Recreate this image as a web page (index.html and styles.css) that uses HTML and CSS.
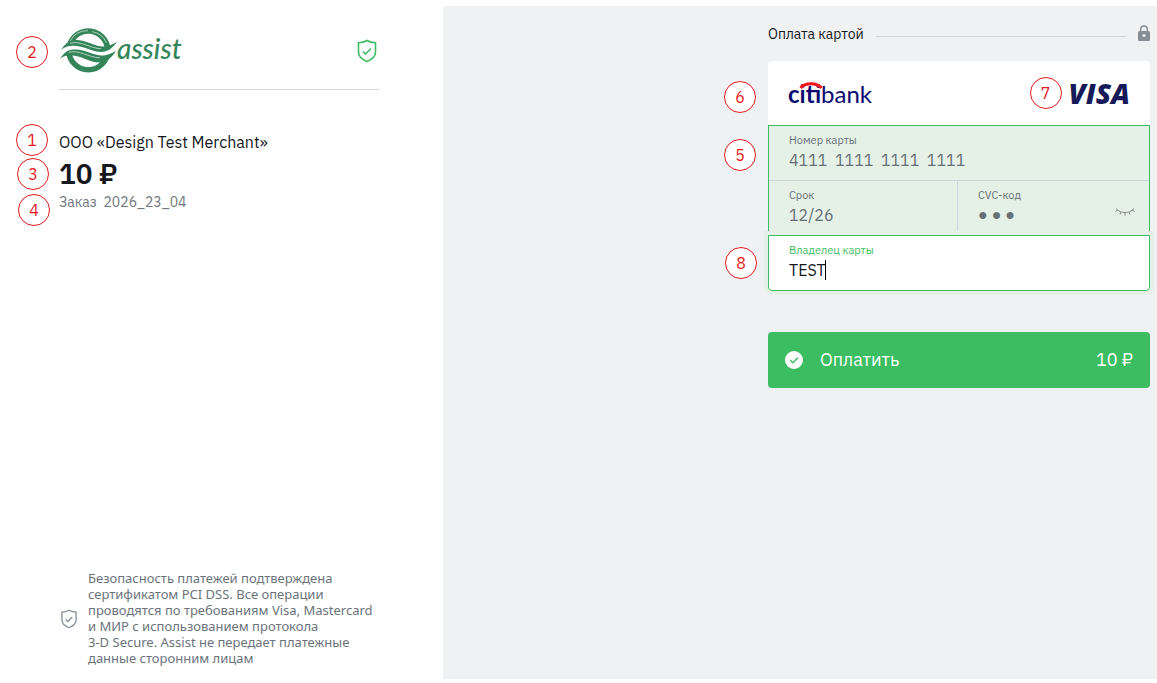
FILE: index.html
```
<!DOCTYPE html>
<html lang="ru">
<head>
<meta charset="utf-8">
<title>Оплата картой</title>
<link rel="stylesheet" href="styles.css">
</head>
<body>
<div class="page">
  <aside class="order">
    <header class="brand">
      <span class="badge">2</span>
      <div class="assist">
        <svg class="assist-mark" viewBox="0 0 58 47" aria-hidden="true">
          <circle cx="29.3" cy="23.4" r="19.4" fill="none" stroke="#35855a" stroke-width="5.6"/>
          <path d="M11 14A20.5 20.5 0 0 1 29 3.6M33 4.6A19 19 0 0 1 47.500 16" fill="none" stroke="#fff" stroke-width=".6"/>
          <path d="M2 28C8 20 14 20 19 21C30 22 34 26.500 43 27C49 27 53 24 57 20" fill="none" stroke="#fff" stroke-width="6"/>
          <path d="M2 23C8 13.500 14 12.500 20 13.200C30 14.200 36 19.500 44 19.500C50 19.500 54 17 58 15C53 21.500 49 25 42 25C34 25 28 20.500 18 19C11 18.300 7 19 2 23Z" fill="#35855a"/>
          <path d="M1 32C6 23 12 21.800 18 22.600C28 23.600 34 28.500 43 28.500C49 28.500 53 26 57 24C52 31.500 47 35.500 40 35.500C32 35.500 26 31 17 29C10 27.500 5 28.500 1 32Z" fill="#35855a"/>
          <path d="M11 16.200C22 13.200 31 21.500 42 21.700M10 25.200C20 22.600 30 30.600 41 30.800" fill="none" stroke="#fff" stroke-width=".6"/>
        </svg>
        <span class="assist-name">assist</span>
      </div>
      <svg class="shield" viewBox="0 0 20 24" aria-hidden="true">
        <path d="M10 1.5C12.5 3 15.5 3.7 18.5 3.8V13C18.5 18.5 14.5 20.7 10 22.5C5.500 20.700 1.500 18.500 1.500 13V3.800C4.500 3.700 7.500 3 10 1.500Z"/>
        <path d="M6 12.600L8.500 15L14 9.500"/>
      </svg>
    </header>
    <div class="summary">
      <div class="merchant"><span class="badge badge-merchant">1</span>ООО «Design Test Merchant»</div>
      <div class="price"><span class="badge badge-price">3</span>10 ₽</div>
      <div class="number"><span class="badge badge-number">4</span>Заказ&nbsp; 2026_23_04</div>
    </div>
    <footer class="security">
      <svg class="shield shield-small" viewBox="0 0 20 24" aria-hidden="true">
        <path d="M10 1.5C12.5 3 15.5 3.7 18.5 3.8V13C18.5 18.5 14.5 20.7 10 22.5C5.500 20.700 1.500 18.500 1.500 13V3.800C4.500 3.700 7.500 3 10 1.500Z"/>
        <path d="M6 12.600L8.500 15L14 9.500"/>
      </svg>
      <p>Безопасность платежей подтверждена<br>сертификатом PCI DSS. Все операции<br>проводятся по требованиям Visa, Mastercard<br>и МИР с использованием протокола<br>3-D Secure. Assist не передает платежные<br>данные сторонним лицам</p>
    </footer>
  </aside>
  <main class="payment">
    <form class="form">
      <div class="heading">
        <h1>Оплата картой</h1>
        <span class="rule"></span>
        <svg class="lock" viewBox="0 0 12 16" aria-hidden="true">
          <path d="M2.700 6.500V4.300A3.300 3.300 0 0 1 9.300 4.300V6.500" fill="none" stroke="#868d95" stroke-width="1.400"/>
          <rect y="6" width="12" height="10" rx="1.500" fill="#868d95"/>
          <circle cx="6" cy="10.500" r="1.600" fill="#eff1f3"/>
        </svg>
      </div>
      <div class="logos">
        <span class="badge badge-bank">6</span>
        <div class="citibank">
          <b>citi</b>bank
          <svg class="citi-arc" viewBox="0 0 24 7" aria-hidden="true"><path d="M1.500 6C6 .300 18 .300 22.500 6" fill="none" stroke="#f5141c" stroke-width="3"/></svg>
        </div>
        <div class="visa"><span class="badge badge-visa">7</span>VISA</div>
      </div>
      <div class="fields">
        <div class="field">
          <span class="badge badge-card">5</span>
          <label for="pan">Номер карты</label>
          <input id="pan" type="text" value="4111  1111  1111  1111">
        </div>
        <div class="pair">
          <div class="field">
            <label for="exp">Срок</label>
            <input id="exp" type="text" value="12/26">
          </div>
          <div class="field cvc">
            <label for="cvc">CVC-код</label>
            <input id="cvc" type="text" value="● ● ●">
            <button class="reveal" type="button" aria-label="Показать код">
              <svg viewBox="0 0 20 9" aria-hidden="true"><path d="M1 1.500C6 7 14 7 19 1.500M2.800 3L.500 4.500M6 5L5 7.500M10 5.700V8.700M14 5L15 7.500M17.200 3L19.500 4.500"/></svg>
            </button>
          </div>
        </div>
      </div>
      <div class="field holder">
        <span class="badge badge-holder">8</span>
        <label for="holder">Владелец карты</label>
        <input id="holder" type="text" value="TEST">
        <span class="caret"></span>
      </div>
      <button class="pay" type="submit">
        <svg viewBox="0 0 18 18" aria-hidden="true"><circle cx="9" cy="9" r="9" fill="#fff"/><path d="M5.300 9.200L7.900 11.700L12.800 6.800" fill="none" stroke="#3dbd62" stroke-width="1.500"/></svg>
        <span>Оплатить</span>
        <span class="sum">10 ₽</span>
      </button>
    </form>
  </main>
</div>
</body>
</html>
```
FILE: styles.css
```
* { box-sizing: border-box; }
body {
  margin: 0;
  background: #fff;
  color: #15181c;
  font-family: "IBM Plex Sans", Roboto, "Noto Sans", sans-serif;
  font-size: 16px;
}
.page {
  display: grid;
  grid-template-columns: minmax(0, 443fr) minmax(0, 714fr);
  min-height: 100vh;
  padding: 6px 0 4px;
}
.badge {
  position: absolute;
  left: -43px;
  top: 50%;
  display: flex;
  align-items: center;
  justify-content: center;
  width: 32px;
  height: 32px;
  margin-top: -16px;
  padding-bottom: 1px;
  border: 1px solid #e3191b;
  border-radius: 50%;
  background: #fff;
  color: #e3191b;
  font-family: "IBM Plex Sans", Roboto, sans-serif;
  font-size: 16px;
  font-weight: 400;
  font-style: normal;
  line-height: 20px;
}
.order {
  display: flex;
  flex-direction: column;
  padding: 20px 64px 13px 59px;
}
.brand {
  position: relative;
  display: flex;
  align-items: center;
  justify-content: space-between;
  height: 64px;
  padding-bottom: 15px;
  border-bottom: 1px solid #d4d7df;
}
.brand .badge { top: 26px; }
.assist { display: flex; align-items: center; }
.assist-mark { width: 58px; height: 47px; }
.assist-name {
  padding-bottom: 4px;
  color: #35855a;
  font: italic 500 28px/32px Lato, sans-serif;
}
.shield {
  flex: none;
  width: 20px;
  height: 24px;
  margin: 2px 2px 0 0;
  fill: none;
  stroke: #3dbd62;
  stroke-width: 1.6;
}
.summary { margin-top: 39px; }
.merchant, .price, .number { position: relative; }
.merchant { line-height: 26px; }
.price { font-size: 28px; font-weight: 600; line-height: 38px; }
.number { color: #6f767d; font-size: 14px; line-height: 18px; }
.badge-merchant { top: 11px; }
.badge-price { left: -42px; }
.badge-number { left: -41px; top: 17px; }
.security {
  display: flex;
  align-items: center;
  gap: 11px;
  margin-top: auto;
  color: #6b737b;
  font: 13px/16px "Noto Sans", sans-serif;
}
.security p { margin: 0; white-space: nowrap; }
.security .shield-small { width: 18px; height: 20px; margin: 2px -1px 0 1px; stroke: #8a9097; }
.payment {
  display: flex;
  justify-content: flex-end;
  padding: 18px 7px 20px 20px;
  background: #eff1f3;
}
.form { width: 100%; max-width: 382px; }
.heading { display: flex; align-items: center; height: 20px; margin-bottom: 17px; }
.heading h1 { margin: 0; font-size: 14px; font-weight: 400; }
.rule { flex: 1; height: 1px; margin: 4px 12px 0; background: #d0d6df; }
.lock { width: 12px; height: 16px; margin-bottom: 2px; }
.logos {
  position: relative;
  display: flex;
  align-items: center;
  justify-content: space-between;
  height: 64px;
  padding: 0 20px;
  border-radius: 4px 4px 0 0;
  background: #fff;
}
.badge-bank { left: -44px; top: 36px; }
.citibank {
  position: relative;
  padding-top: 2px;
  color: #0b0a72;
  font: 400 24px/28px Lato, sans-serif;
}
.citibank b { font-weight: 700; }
.citi-arc { position: absolute; left: 11px; top: 4px; width: 24px; height: 7px; }
.visa {
  position: relative;
  color: #161a59;
  font: italic 800 28px/32px "Open Sans", sans-serif;
}
.badge-visa { left: -39px; }
.fields { border: 1px solid #3dbd62; border-bottom: 0; background: #e5f0e7; color: #656f76; }
.field {
  position: relative;
  display: flex;
  flex-direction: column;
  height: 54px;
  padding: 6px 20px 0;
}
.field label { font: 11px/16px "IBM Plex Sans", "Noto Sans", sans-serif; }
.field input {
  width: 100%;
  height: 24px;
  padding: 0;
  border: 0;
  outline: 0;
  background: transparent;
  color: inherit;
  font: 16px/24px "IBM Plex Sans", Roboto, "Noto Sans", sans-serif;
}
.pair {
  display: grid;
  grid-template-columns: 188fr 192fr;
  border-top: 1px solid #d0d6df;
}
.pair .cvc { border-left: 1px solid #d0d6df; }
.field.cvc input { font: 16px/24px Roboto, sans-serif; }
.reveal {
  position: absolute;
  right: 14px;
  top: 26px;
  padding: 0;
  border: 0;
  background: none;
  line-height: 0;
}
.reveal svg { width: 20px; height: 9px; fill: none; stroke: #858d8e; stroke-width: 1; }
.badge-card { left: -45px; top: 29px; }
.holder {
  height: 56px;
  border: 1px solid #3dbd62;
  border-radius: 0 0 4px 4px;
  background: #fff;
  box-shadow: 0 0 0 4px #e5f0e7;
}
.holder label { color: #3dbd62; }
.badge-holder { left: -44px; }
.caret { position: absolute; left: 56px; top: 24px; width: 1px; height: 20px; background: #000; }
.pay {
  display: flex;
  align-items: center;
  gap: 17px;
  width: 100%;
  height: 56px;
  margin-top: 41px;
  padding: 0 17px;
  border: 0;
  border-radius: 4px;
  background: #3dbd62;
  color: #fff;
  font: 18px/24px "IBM Plex Sans", Roboto, "Noto Sans", sans-serif;
}
.pay svg { width: 18px; height: 18px; }
.sum { margin-left: auto; }
```
